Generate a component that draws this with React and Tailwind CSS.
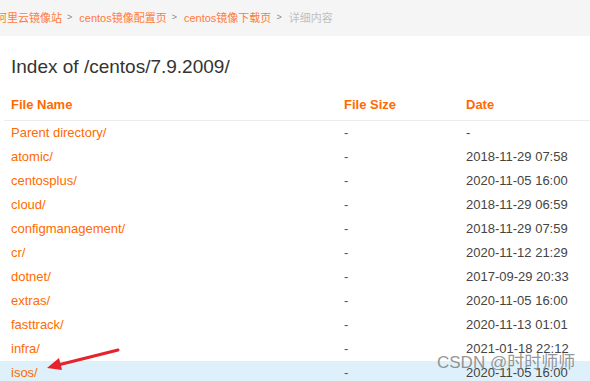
import React from 'react';

const rows = [
  { name: 'Parent directory/', size: '-', date: '-' },
  { name: 'atomic/', size: '-', date: '2018-11-29 07:58' },
  { name: 'centosplus/', size: '-', date: '2020-11-05 16:00' },
  { name: 'cloud/', size: '-', date: '2018-11-29 06:59' },
  { name: 'configmanagement/', size: '-', date: '2018-11-29 07:59' },
  { name: 'cr/', size: '-', date: '2020-11-12 21:29' },
  { name: 'dotnet/', size: '-', date: '2017-09-29 20:33' },
  { name: 'extras/', size: '-', date: '2020-11-05 16:00' },
  { name: 'fasttrack/', size: '-', date: '2020-11-13 01:01' },
  { name: 'infra/', size: '-', date: '2021-01-18 22:12' },
  { name: 'isos/', size: '-', date: '2020-11-05 16:00', active: true },
];

const Sep = () => <span className="ml-[5px] mr-[7px] text-[9px] text-[#888]">&gt;</span>;

export default function App() {
  return (
    <div className="relative w-[590px] h-[381px] overflow-hidden bg-white font-['Liberation_Sans','Noto_Sans_CJK_SC',Arial,sans-serif]">
      {/* Breadcrumb */}
      <div className="h-[36px] bg-[#f5f5f5] flex items-center text-[11px] whitespace-nowrap">
        <span className="-ml-[4px] text-[#ff7a3d]">阿里云镜像站</span>
        <Sep />
        <span className="text-[#ff7a3d]">centos镜像配置页</span>
        <Sep />
        <span className="text-[#ff7a3d]">centos镜像下载页</span>
        <Sep />
        <span className="text-[#c0c0c0]">详细内容</span>
      </div>

      {/* Title */}
      <h1 className="pt-[20px] pl-[11px] text-[19px] leading-[22px] text-[#333]">Index of /centos/7.9.2009/</h1>

      {/* Table */}
      <div className="mt-[11px]">
        <div className="grid grid-cols-[326px_122px_1fr] h-[31px] items-center pl-[11px] text-[13px] font-bold text-[#ff6a00]">
          <div>File Name</div>
          <div className="pl-[7px]">File Size</div>
          <div className="pl-[7px]">Date</div>
        </div>
        <div className="ml-[4px] h-px bg-[#ececec]" />
        {rows.map((r) => (
          <div
            key={r.name}
            className={`grid grid-cols-[326px_122px_1fr] h-[24px] items-center pl-[11px] text-[13px] ${r.active ? 'bg-[#def0fa]' : ''}`}
          >
            <div className="text-[#ff6a00]">{r.name}</div>
            <div className="pl-[7px] text-[#555]">{r.size}</div>
            <div className="pl-[7px] text-[#444]">{r.date}</div>
          </div>
        ))}
      </div>

      {/* Red annotation arrow */}
      <svg className="absolute left-0 top-0" width="590" height="381" viewBox="0 0 590 381">
        <line x1="118" y1="350" x2="58" y2="365" stroke="#e8222a" strokeWidth="3" strokeLinecap="round" />
        <polygon points="47,368 59,358 62,370" fill="#e8222a" />
      </svg>

      {/* Watermark */}
      <div className="absolute left-[437px] top-[353px] text-[17px] leading-[20px] text-[#7a7a7a]/80 whitespace-nowrap">
        CSDN @时时师师
      </div>
    </div>
  );
}
